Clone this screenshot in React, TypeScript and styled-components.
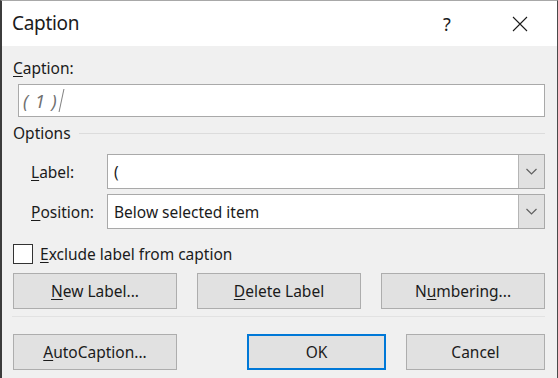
import React from 'react';
import styled, { createGlobalStyle } from 'styled-components';

const Global = createGlobalStyle`
    html, body {
        margin: 0;
        padding: 0;
        background: #f0f0f0;
    }
    body {
        font-family: "Segoe UI", "Noto Sans", "Open Sans", sans-serif;
        color: #1b1b1b;
    }
`;

const Window = styled.div`
    width: 558px;
    height: 378px;
    box-sizing: border-box;
    display: flex;
    flex-direction: column;
    border-top: 1px solid #a8a8a8;
    border-left: 2px solid #3c3c3c;
    border-right: 1px solid #4a4a4a;
    overflow: hidden;
`;

const TitleBar = styled.div`
    height: 45px;
    flex-shrink: 0;
    background: #ffffff;
    display: flex;
    align-items: center;
    padding-left: 10px;
`;

const Title = styled.div`
    flex: 1;
    font-size: 19px;
    letter-spacing: -0.3px;
    padding-bottom: 2px;
`;

const TitleButton = styled.div<{ $w: number }>`
    width: ${p => p.$w}px;
    height: 45px;
    display: flex;
    align-items: center;
    justify-content: center;
    font-size: 18px;
`;

const Body = styled.div`
    flex: 1;
    background: #f0f0f0;
    padding: 11px 12px 0 10px;
    display: flex;
    flex-direction: column;
    font-size: 15.5px;
`;

const Key = styled.u`
    text-decoration-thickness: 1px;
    text-underline-offset: 2px;
`;

const FieldLabel = styled.div`
    line-height: 22px;
    padding-left: 1px;
`;

const CaptionInput = styled.div`
    margin: 5px 0 0 6px;
    height: 33px;
    box-sizing: border-box;
    background: #ffffff;
    border: 1px solid #a9a9a9;
    display: flex;
    align-items: center;
    padding-left: 4px;
    font-size: 18px;
    font-style: italic;
    color: #707070;
    letter-spacing: 1px;
`;

const Caret = styled.span`
    display: inline-block;
    width: 1px;
    height: 23px;
    margin-left: 3px;
    background: #808080;
    transform: skewX(-12deg);
`;

const GroupHead = styled.div`
    display: flex;
    align-items: center;
    gap: 8px;
    margin-top: 5px;
    line-height: 22px;
    padding-left: 1px;
`;

const GroupRule = styled.div`
    flex: 1;
    height: 1px;
    background: #dcdcdc;
`;

const Rows = styled.div`
    display: flex;
    flex-direction: column;
    gap: 5px;
    margin-top: 10px;
`;

const Row = styled.div`
    display: flex;
    align-items: center;
`;

const RowLabel = styled.div`
    width: 76px;
    padding-left: 19px;
`;

const Select = styled.div`
    flex: 1;
    height: 35px;
    box-sizing: border-box;
    border: 1px solid #a9a9a9;
    background: #ffffff;
    display: flex;
    align-items: stretch;
`;

const SelectText = styled.div`
    flex: 1;
    display: flex;
    align-items: center;
    padding-left: 6px;
`;

const DropButton = styled.div`
    width: 25px;
    background: #e1e1e1;
    border-left: 1px solid #b5b5b5;
    display: flex;
    align-items: center;
    justify-content: center;
`;

const CheckRow = styled.label`
    display: flex;
    align-items: center;
    gap: 7px;
    margin-top: 15px;
    padding-left: 1px;
    line-height: 20px;
`;

const Box = styled.span`
    width: 20px;
    height: 20px;
    box-sizing: border-box;
    border: 1px solid #333333;
    background: #ffffff;
`;

const ButtonRow = styled.div<{ $mt: number }>`
    display: flex;
    justify-content: space-between;
    margin-top: ${p => p.$mt}px;
    padding-left: 1px;
`;

const Button = styled.button<{ $w: number; $default?: boolean }>`
    width: ${p => p.$w}px;
    height: 36px;
    box-sizing: border-box;
    background: #e1e1e1;
    border: ${p => (p.$default ? '2px solid #0078d7' : '1px solid #adadad')};
    font: inherit;
    color: inherit;
    padding: 0;
`;

const Right = styled.div`
    display: flex;
    gap: 20px;
`;

const Separator = styled.div`
    height: 1px;
    background: #e2e2e2;
    margin-top: 7px;
`;

const Chevron = () => (
    <svg width="11" height="7" viewBox="0 0 11 7">
        <path d="M0.5 1 L5.5 6 L10.5 1" fill="none" stroke="#606060" strokeWidth="1.2" />
    </svg>
);

const CloseIcon = () => (
    <svg width="16" height="16" viewBox="0 0 16 16">
        <path d="M1 1 L15 15 M15 1 L1 15" stroke="#1b1b1b" strokeWidth="1.1" />
    </svg>
);

const App = () => (
    <>
        <Global />
        <Window>
            <TitleBar>
                <Title>Caption</Title>
                <TitleButton $w={70}>?</TitleButton>
                <TitleButton $w={75}><CloseIcon /></TitleButton>
            </TitleBar>
            <Body>
                <FieldLabel><Key>C</Key>aption:</FieldLabel>
                <CaptionInput>( 1 )<Caret /></CaptionInput>
                <GroupHead>Options<GroupRule /></GroupHead>
                <Rows>
                    <Row>
                        <RowLabel><Key>L</Key>abel:</RowLabel>
                        <Select>
                            <SelectText>(</SelectText>
                            <DropButton><Chevron /></DropButton>
                        </Select>
                    </Row>
                    <Row>
                        <RowLabel><Key>P</Key>osition:</RowLabel>
                        <Select>
                            <SelectText>Below selected item</SelectText>
                            <DropButton><Chevron /></DropButton>
                        </Select>
                    </Row>
                </Rows>
                <CheckRow>
                    <Box />
                    <span><Key>E</Key>xclude label from caption</span>
                </CheckRow>
                <ButtonRow $mt={9}>
                    <Button $w={164}><Key>N</Key>ew Label...</Button>
                    <Button $w={164}><Key>D</Key>elete Label</Button>
                    <Button $w={164}>N<Key>u</Key>mbering...</Button>
                </ButtonRow>
                <Separator />
                <ButtonRow $mt={17}>
                    <Button $w={164}><Key>A</Key>utoCaption...</Button>
                    <Right>
                        <Button $w={139} $default>OK</Button>
                        <Button $w={139}>Cancel</Button>
                    </Right>
                </ButtonRow>
            </Body>
        </Window>
    </>
);

export default App;
